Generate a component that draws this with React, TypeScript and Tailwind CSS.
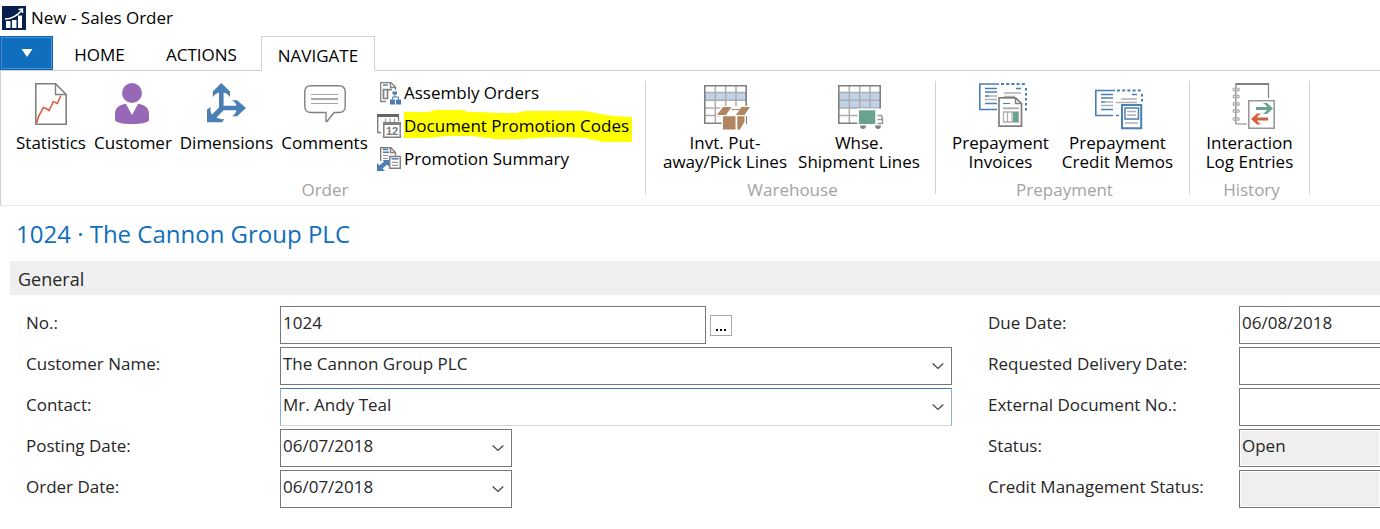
import type { ReactNode } from "react";

const GREY = "#808080";
const BLUE = "#4a7fb5";
const BROWN = "#b08560";
const GREEN = "#68a38f";
const RED = "#d9603f";

function StatisticsIcon() {
  return (
    <svg width="32" height="48" viewBox="0 0 32 48" fill="none" aria-hidden="true">
      <path d="M.8 .8H20.5L31.2 11.5V41.2H.8Z" fill="#fff" stroke={GREY} strokeWidth="1.6" />
      <path d="M20.5 1V11.5H31" stroke={GREY} strokeWidth="1.4" />
      <path d="M1.7 40 3.7 33 6 29 8.3 24.5 11.5 25.8 14 27.5 16.3 23 18.3 18.8 20.5 19.5 22.5 20.5 24.5 15.5 26 12.5" stroke={RED} strokeWidth="1.6" />
    </svg>
  );
}

function CustomerIcon() {
  return (
    <svg width="36" height="48" viewBox="0 0 36 48" fill="#9768b8" aria-hidden="true">
      <circle cx="17" cy="10" r="10" />
      <path d="M11 21 17 32 23 21C30 21.500 34 25 34 31V37C33 39.500 27 41 17 41S1 39.500 0 37V31C0 25 4 21.500 11 21Z" />
    </svg>
  );
}

function DimensionsIcon() {
  return (
    <svg width="39" height="48" viewBox="0 0 39 48" fill={BLUE} aria-hidden="true">
      <path d="M14.300 0 23 8.500V14C20.500 11 18.500 10 16.600 9.500V22.700H29.500C29 20.500 27.500 18.800 25 17.300H30L39 25 30 33.300H25C27.500 31.800 29 29.500 29.500 27.200H16.600L9.500 34.500C12 36.200 14.500 36.500 17.500 36L15 39.300H0V26.500L3.700 24C3 27 3.500 29.500 5 31.500L12 24.500V9.500C10 10 8 11.200 5.800 14V8.500Z" />
    </svg>
  );
}

function CommentsIcon() {
  return (
    <svg width="42" height="48" viewBox="0 0 42 48" fill="none" aria-hidden="true">
      <path d="M7 2.700H35Q41.200 2.700 41.200 9V23Q41.200 29.500 35 29.500H30L23 38.500H22V29.500H7Q.8 29.500 .8 23V9Q.8 2.700 7 2.700Z" stroke={GREY} strokeWidth="1.4" />
      <path d="M7 11.500H34M7 20.500H34" stroke="#a6a6a6" />
      <path d="M7 16H34" stroke="#a6a6a6" strokeWidth="2" />
    </svg>
  );
}

function WarehouseGrid({ blueRows }: { blueRows: number }) {
  return (
    <>
      <path d="M.8 2.800H42.200V40.200H.8Z" fill="#fff" />
      <path d={blueRows === 1 ? "M1 10H42V17.500H1Z" : "M1 10H42V25H1Z"} fill="#bfd2e8" />
      <path d="M11.300 2V40M21.700 2V40M32 2V40M1 9.500H42M1 17.300H42M1 25H42M1 32.500H42" stroke="#adadad" strokeWidth="1.500" />
      <path d="M.8 2.800H42.200V40.200H.8Z" stroke={GREY} strokeWidth="1.600" />
    </>
  );
}

function PutAwayIcon() {
  return (
    <svg width="50" height="48" viewBox="-4 0 50 48" fill="none" aria-hidden="true">
      <WarehouseGrid blueRows={1} />
      <path d="M17 23H46V33H42V42L34 47H17.500V33H12Z" fill="#fff" />
      <path d="M19 24H27.500L22 32H13ZM37.500 24H46L40.500 32H32ZM19 33.300H31.500V46.500H19ZM33.300 33.300H40.500V38.500L36 46.500H33.300Z" fill={BROWN} />
      <path d="M27.500 26.500H36" stroke={BROWN} />
    </svg>
  );
}

function ShipmentIcon() {
  return (
    <svg width="50" height="48" viewBox="-4 0 50 48" fill="none" aria-hidden="true">
      <WarehouseGrid blueRows={2} />
      <path d="M19.500 25.500H46V47H19.500Z" fill="#fff" />
      <path d="M21 27.300H37.300V41H21Z" fill={GREEN} />
      <path d="M39.500 32.500H43.500L44.500 36V40.500H39.500M39.500 36.500H44" stroke="#999" strokeWidth="1.500" />
      <path d="M22 42.500H28C28 47.200 22 47.200 22 42.500ZM37 42.500H43C43 47.200 37 47.200 37 42.500Z" fill={GREY} />
    </svg>
  );
}

function PrepaymentInvoiceIcon() {
  return (
    <svg width="52" height="48" viewBox="-4 0 52 48" fill="none" aria-hidden="true">
      <path d="M20 1H.8V26.500H18" stroke={BLUE} strokeWidth="1.600" />
      <path d="M22 1H48" stroke={BLUE} strokeWidth="2" strokeDasharray="3 2.200" />
      <path d="M47 5V28" stroke={BLUE} strokeWidth="2" strokeDasharray="2.500 2.500" />
      <path d="M6 5.500H18M6 9H18M6 20.500H18M37 5.500H42M6 13H10" stroke={BLUE} strokeWidth="1.300" />
      <path d="M10 13H18M6 16.500H18M25 10H42M25 13.500H36" stroke="#b0b0b0" strokeWidth="1.600" />
      <path d="M20 14.800H36.500L42.500 20.500V43.200H20Z" fill="#fff" stroke={GREY} strokeWidth="1.700" />
      <path d="M36.500 14.800V20.500H42.500" stroke={GREY} strokeWidth="1.500" />
      <path d="M24 20.500H31" stroke={BLUE} />
      <path d="M24 25.300H40" stroke="#b0b0b0" strokeWidth="2" />
      <path d="M24.500 29H39.500V39H24.500ZM28.500 29V39M33 29V39" stroke="#b0b0b0" strokeWidth="1.300" />
      <path d="M34 29H39V39H34Z" fill={GREEN} />
    </svg>
  );
}

function PrepaymentMemoIcon() {
  return (
    <svg width="50" height="48" viewBox="-2 0 50 48" fill="none" aria-hidden="true">
      <path d="M20 7.500H.8V32.500H18M21 32.500H24" stroke={BLUE} strokeWidth="1.600" />
      <path d="M22 7.500H48" stroke={BLUE} strokeWidth="2" strokeDasharray="3 2.200" />
      <path d="M47 11V20" stroke={BLUE} strokeWidth="2" strokeDasharray="2.500 2.500" />
      <path d="M6 11.500H18M6 15H18M6 26.500H18M37 11.500H42M6 19H10" stroke={BLUE} strokeWidth="1.300" />
      <path d="M10 19H18M6 22.500H18M26 16H42M21 19.500H42" stroke="#b0b0b0" strokeWidth="1.600" />
      <path d="M27 22H46.200V45.200H27Z" fill="#fff" stroke={BLUE} strokeWidth="2" />
      <path d="M30 25H43.500V36H30Z" stroke={BLUE} strokeWidth="1.500" />
      <path d="M32 28.500H41M32 32H41M30 40H43" stroke="#b0b0b0" strokeWidth="1.600" />
    </svg>
  );
}

function InteractionIcon() {
  return (
    <svg width="50" height="48" viewBox="-8 0 50 48" fill="none" aria-hidden="true">
      <path d="M2.800 41H14M2.800 41V1" stroke={GREY} strokeWidth="1.200" />
      <path d="M2.500 1H36" stroke={GREY} strokeWidth="2" />
      <path d="M35.500 1V15" stroke={GREY} strokeWidth="1.200" />
      {[6.500, 13.500, 21, 28, 36].map((y) => (
        <g key={y} fill="#fff" stroke="#aaa" strokeWidth="1.200">
          <circle cx="1.400" cy={y} r="1.300" />
          <circle cx="5" cy={y} r="1.300" />
        </g>
      ))}
      <path d="M15.800 17.800H41.200V45.200H15.800Z" fill="#fff" stroke="#999" strokeWidth="1.600" />
      <path d="M23 24H34C33 22 31.500 20.800 29.500 20H34L40 25.500 34 31H29.500C31.500 30 33 28.800 34 27H23Z" fill={GREEN} />
      <path d="M35 34.500H24C25 32.500 26.500 31.300 28.500 30.500H24L18 36 24 41.500H28.500C26.500 40.500 25 39.300 24 37.500H35Z" fill={RED} />
    </svg>
  );
}

function AssemblyIcon() {
  return (
    <svg width="24" height="24" viewBox="0 0 24 24" fill="none" aria-hidden="true">
      <path d="M9 20.500H3.700V1.600H14L18.500 6V9M13.500 1.600V6.500H18.500" stroke={GREY} strokeWidth="1.300" />
      <path d="M6 4H11" stroke={BLUE} strokeWidth="1.400" />
      <path d="M5.500 8.700H15M6.500 9V17.500H10.500V9" stroke={GREY} strokeWidth="1.700" />
      <path d="M15.500 10.500H20V13.500H15.500ZM13 18.500H18V23.500H13ZM19 18.500H24V23.500H19Z" fill={BLUE} />
      <path d="M17.800 13V16M15.500 18.500V16H21.500V18.500" stroke={BLUE} />
    </svg>
  );
}

function CalendarIcon() {
  return (
    <svg width="24" height="24" viewBox="0 0 24 24" fill="none" aria-hidden="true">
      <path d="M0 0H22V3H0Z" fill="#666" />
      <path d="M.7 3V18.500H4M21.500 3V7" stroke={GREY} strokeWidth="1.400" />
      <path d="M8.500 4.500V8M13 4.500V8M17.500 4.500V8" stroke="#999" strokeWidth="1.200" />
      <path d="M6.800 8.700H23.200V23.300H6.800Z" fill="#fff" stroke={GREY} strokeWidth="1.500" />
      <path d="M6 8H24V11H6Z" fill={GREY} />
      <text x="15" y="21" textAnchor="middle" fill="#777" className="font-['Liberation_Sans'] text-[11px] font-bold">12</text>
    </svg>
  );
}

function SummaryIcon() {
  return (
    <svg width="24" height="24" viewBox="0 0 24 24" fill="none" aria-hidden="true">
      <path d="M3.700 14V.700H14L18.500 5.500V9M13.500 .700V5.500H18.500" stroke={GREY} strokeWidth="1.400" />
      <path d="M6 2.500H11M6 5.300H12" stroke={BLUE} strokeWidth="1.500" />
      <path d="M6 8.500H11M6 11.500H11" stroke="#999" strokeWidth="1.200" />
      <path d="M12.700 9.500H23.300V21.300H12.700Z" fill="#fff" stroke={GREY} strokeWidth="1.500" />
      <path d="M14.500 11.800H21.500" stroke={BLUE} strokeWidth="1.500" />
      <path d="M15 15.300H21M15 18.300H21" stroke="#999" strokeWidth="1.300" />
      <path d="M0 16 2.500 18.500 7 14.500 5.500 13H12V19.500L10 17.500 5.500 21.500 8 24H0Z" fill={BLUE} />
    </svg>
  );
}

function AppLogo() {
  return (
    <svg width="24" height="24" viewBox="0 0 24 24" fill="none" aria-hidden="true">
      <path d="M0 0H24V24H0Z" fill="#06204d" />
      <path d="M4 15H8.500V22H4ZM10 14H14.500V22H10ZM16 9.500H20V22H16Z" fill="#fff" />
      <path d="M3 13C9 13 15 10 20 4M16.500 3.500 20.500 3V7" stroke="#fff" strokeWidth="1.400" />
    </svg>
  );
}

function RibbonButton({ icon, lines, width }: { icon: ReactNode; lines: string[]; width: string }) {
  return (
    <button type="button" className={`flex shrink-0 flex-col items-center justify-start ${width}`}>
      {icon}
      <span className="mt-0.5 leading-[19px] whitespace-nowrap">
        {lines.map((line) => (
          <span key={line} className="block">{line}</span>
        ))}
      </span>
    </button>
  );
}

function RibbonLink({ icon, label, marked = false }: { icon: ReactNode; label: string; marked?: boolean }) {
  return (
    <button type="button" className="flex h-5 items-center gap-[3px] whitespace-nowrap">
      <span className="shrink-0">{icon}</span>
      <span className="relative">
        {marked && (
          <svg className="absolute top-1/2 left-0 -mt-4 h-8 w-[228px]" viewBox="0 0 228 32" aria-hidden="true">
            <path d="M0 2H25L31 0H59L64 2H79L92 3H113L121 1H181L202 5L211 6L228 7V32H200L190 30L180 28L158 27L133 28L118 29H92L67 26L43 26L25 28H0Z" fill="#ff0" />
          </svg>
        )}
        <span className="relative">{label}</span>
      </span>
    </button>
  );
}

function RibbonGroup({ title, width, children }: { title: string; width: string; children: ReactNode }) {
  return (
    <section aria-label={title} className={`flex shrink-0 ${width}`}>
      <div className="flex grow flex-col justify-between gap-[9px] pt-3 pb-1.5">
        <div className="flex">{children}</div>
        <h2 className="pl-1 text-center leading-[19px] text-[#a3a3a3]">{title}</h2>
      </div>
      <div className="mt-2.5 mb-[11px] w-px bg-[#d2d2d2]" />
    </section>
  );
}

const frame = "h-[38px] w-full min-w-0 rounded-none border pl-0.5";
const inputBox = `${frame} border-[#787878] bg-white pb-1.5`;
const lockedBox = `${frame} border-[#787878] bg-[#efefef] pb-1.5 inset-ring inset-ring-white`;
const selectBox = `${frame} appearance-none border-[#787878] bg-white pb-1`;
const activeBox = `${frame} appearance-none border-x-[#8db0d3] border-t-[#3f7ab5] border-b-[#ccd8e4] bg-white pb-1`;

function Row({ id, label, labelWidth, children }: { id: string; label: string; labelWidth: string; children: ReactNode }) {
  return (
    <div className="flex h-[38px]">
      <label htmlFor={id} className={`shrink-0 pt-1.5 leading-[22px] ${labelWidth}`}>{label}</label>
      {children}
    </div>
  );
}

function Dropdown({ id, value, narrow = false, active = false }: { id: string; value: string; narrow?: boolean; active?: boolean }) {
  return (
    <div className={narrow ? "relative w-[232px]" : "relative grow"}>
      <select id={id} className={active ? activeBox : selectBox}>
        <option>{value}</option>
      </select>
      <svg className="pointer-events-none absolute top-4 right-2" width="12" height="7" viewBox="0 0 12 7" fill="none" stroke="#444" strokeWidth="1.200" aria-hidden="true">
        <path d="M.7 .5 6 5.500 11.300 .5" />
      </svg>
    </div>
  );
}

const details = [
  { id: "due", label: "Due Date:", value: "06/08/2018", locked: false },
  { id: "delivery", label: "Requested Delivery Date:", value: "", locked: false },
  { id: "external", label: "External Document No.:", value: "", locked: false },
  { id: "status", label: "Status:", value: "Open", locked: true },
  { id: "credit", label: "Credit Management Status:", value: "", locked: true },
];

export default function App() {
  return (
    <div className="min-h-screen overflow-hidden bg-white font-['Open_Sans','Noto_Sans',sans-serif] text-[17px] text-black">
      <header className="flex h-9 items-center gap-[5px] pl-0.5">
        <AppLogo />
        <h1>New - Sales Order</h1>
      </header>

      <nav className="flex h-[35px] border-b border-[#d2d2d2]">
        <button type="button" aria-label="Application menu" className="flex w-[53px] items-center justify-center border border-[#0f62b5] bg-[#106ebe] inset-ring inset-ring-[#4a90d2]">
          <svg width="12" height="8" viewBox="0 0 12 8" aria-hidden="true">
            <path d="M.5 0H11.500L6 8Z" fill="#fff" />
          </svg>
        </button>
        <button type="button" className="w-[93px] pt-1">HOME</button>
        <button type="button" className="w-[111px] pt-1">ACTIONS</button>
        <button type="button" className="-mb-px ml-1 w-[114px] border border-b-0 border-[#d2d2d2] bg-white pt-1">NAVIGATE</button>
      </nav>

      <div className="flex border-b border-l border-b-[#e6e6e6] border-l-[#d2d2d2]">
        <RibbonGroup title="Order" width="w-[645px]">
          <div className="flex pl-[11px]">
            <RibbonButton icon={<StatisticsIcon />} lines={["Statistics"]} width="w-[78px]" />
            <RibbonButton icon={<CustomerIcon />} lines={["Customer"]} width="w-[86px]" />
            <RibbonButton icon={<DimensionsIcon />} lines={["Dimensions"]} width="w-[101px]" />
            <RibbonButton icon={<CommentsIcon />} lines={["Comments"]} width="w-[95px]" />
            <div className="ml-[5px] flex flex-col gap-[13px]">
              <RibbonLink icon={<AssemblyIcon />} label="Assembly Orders" />
              <RibbonLink icon={<CalendarIcon />} label="Document Promotion Codes" marked />
              <RibbonLink icon={<SummaryIcon />} label="Promotion Summary" />
            </div>
          </div>
        </RibbonGroup>
        <RibbonGroup title="Warehouse" width="w-[290px]">
          <div className="flex pl-3">
            <RibbonButton icon={<PutAwayIcon />} lines={["Invt. Put-", "away/Pick Lines"]} width="w-[134px]" />
            <RibbonButton icon={<ShipmentIcon />} lines={["Whse.", "Shipment Lines"]} width="w-[134px]" />
          </div>
        </RibbonGroup>
        <RibbonGroup title="Prepayment" width="w-[254px]">
          <div className="flex pl-1.5">
            <RibbonButton icon={<PrepaymentInvoiceIcon />} lines={["Prepayment", "Invoices"]} width="w-[117px]" />
            <RibbonButton icon={<PrepaymentMemoIcon />} lines={["Prepayment", "Credit Memos"]} width="w-[117px]" />
          </div>
        </RibbonGroup>
        <RibbonGroup title="History" width="w-[120px]">
          <RibbonButton icon={<InteractionIcon />} lines={["Interaction", "Log Entries"]} width="w-full" />
        </RibbonGroup>
      </div>

      <main className="text-[#262626]">
        <h2 className="pt-3 pb-[11px] pl-4 text-2xl text-[#106ebe]">1024 · The Cannon Group PLC</h2>
        <h3 className="ml-2.5 bg-[#efefef] pt-0.5 pl-2 text-lg leading-8">General</h3>
        <form className="grid grid-cols-[926fr_392fr] gap-9 pt-[11px] pl-[26px]">
          <div className="flex flex-col gap-[3px]">
            <Row id="no" label="No.:" labelWidth="w-[254px]">
              <div className="flex grow items-center gap-1 pr-[220px]">
                <input id="no" defaultValue="1024" className={inputBox} />
                <button type="button" aria-label="Look up number" className="flex h-[21px] w-[22px] shrink-0 items-end justify-center border border-[#a9a9b0] pb-1">
                  <svg width="10" height="2" viewBox="0 0 10 2" aria-hidden="true">
                    <path d="M0 0H2V2H0ZM4 0H6V2H4ZM8 0H10V2H8Z" fill="#000" />
                  </svg>
                </button>
              </div>
            </Row>
            <Row id="customer" label="Customer Name:" labelWidth="w-[254px]">
              <Dropdown id="customer" value="The Cannon Group PLC" />
            </Row>
            <Row id="contact" label="Contact:" labelWidth="w-[254px]">
              <Dropdown id="contact" value="Mr. Andy Teal" active />
            </Row>
            <Row id="posting" label="Posting Date:" labelWidth="w-[254px]">
              <Dropdown id="posting" value="06/07/2018" narrow />
            </Row>
            <Row id="order" label="Order Date:" labelWidth="w-[254px]">
              <Dropdown id="order" value="06/07/2018" narrow />
            </Row>
          </div>
          <div className="flex flex-col gap-[3px]">
            {details.map((d) => (
              <Row key={d.id} id={d.id} label={d.label} labelWidth="w-[251px]">
                <input
                  id={d.id}
                  defaultValue={d.value}
                  readOnly={d.locked}
                  className={d.locked ? `${lockedBox} border-r-0` : `${inputBox} border-r-0`}
                />
              </Row>
            ))}
          </div>
        </form>
      </main>
    </div>
  );
}
